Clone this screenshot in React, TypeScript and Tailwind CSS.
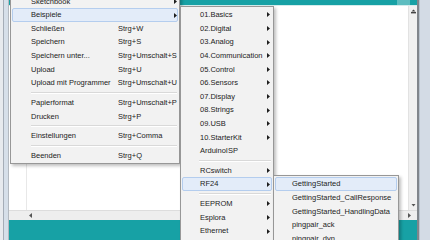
import React from "react";

type Item = {
  label?: string;
  shortcut?: string;
  arrow?: boolean;
  hl?: boolean;
  sep?: boolean;
};

const Arrow = () => (
  <svg width="3" height="5" viewBox="0 0 3 5" className="shrink-0 ml-auto">
    <polygon points="0,0 3,2.5 0,5" fill="#1e1e1e" />
  </svg>
);

function Row({ item, padCls, labelCls, arrowCls }: { item: Item; padCls: string; labelCls: string; arrowCls: string }) {
  return (
    <div
      className={`mx-[1px] h-[13.6px] flex items-center rounded-[2px] border ${
        item.hl ? "border-[#b4cdee] bg-[#e3ecf9]" : "border-transparent"
      } ${padCls}`}
    >
      <span className={`whitespace-nowrap ${labelCls}`}>{item.label}</span>
      {item.shortcut && <span className="whitespace-nowrap">{item.shortcut}</span>}
      {item.arrow && (
        <span className={`ml-auto flex ${arrowCls}`}>
          <Arrow />
        </span>
      )}
    </div>
  );
}

function Sep({ cls }: { cls: string }) {
  return (
    <div className={`h-[6.1px] flex flex-col justify-center ${cls}`}>
      <div className="h-px bg-[#d9d9d9]" />
      <div className="h-px bg-white" />
    </div>
  );
}

const menu1: Item[] = [
  { label: "Sketchbook", arrow: true },
  { label: "Beispiele", arrow: true, hl: true },
  { label: "Schließen", shortcut: "Strg+W" },
  { label: "Speichern", shortcut: "Strg+S" },
  { label: "Speichern unter...", shortcut: "Strg+Umschalt+S" },
  { label: "Upload", shortcut: "Strg+U" },
  { label: "Upload mit Programmer", shortcut: "Strg+Umschalt+U" },
  { sep: true },
  { label: "Papierformat", shortcut: "Strg+Umschalt+P" },
  { label: "Drucken", shortcut: "Strg+P" },
  { sep: true },
  { label: "Einstellungen", shortcut: "Strg+Comma" },
  { sep: true },
  { label: "Beenden", shortcut: "Strg+Q" },
];

const menu2: Item[] = [
  { label: "01.Basics", arrow: true },
  { label: "02.Digital", arrow: true },
  { label: "03.Analog", arrow: true },
  { label: "04.Communication", arrow: true },
  { label: "05.Control", arrow: true },
  { label: "06.Sensors", arrow: true },
  { label: "07.Display", arrow: true },
  { label: "08.Strings", arrow: true },
  { label: "09.USB", arrow: true },
  { label: "10.StarterKit", arrow: true },
  { label: "ArduinoISP" },
  { sep: true },
  { label: "RCswitch", arrow: true },
  { label: "RF24", arrow: true, hl: true },
  { sep: true },
  { label: "EEPROM", arrow: true },
  { label: "Esplora", arrow: true },
  { label: "Ethernet", arrow: true },
  { label: "Firmata", arrow: true },
];

const menu3: Item[] = [
  { label: "GettingStarted", hl: true },
  { label: "GettingStarted_CallResponse" },
  { label: "GettingStarted_HandlingData" },
  { label: "pingpair_ack" },
  { label: "pingpair_dyn" },
  { label: "pingpair_irq" },
];

export default function App() {
  return (
    <div className="relative w-[430px] h-[240px] overflow-hidden flex bg-white font-['Liberation_Sans',Arial,sans-serif] text-[7.5px] leading-none text-[#1c1c1c]">
      {/* left window frame */}
      <div className="w-[9px] h-full flex shrink-0">
        <div className="w-[3px] bg-[#e7eaee]" />
        <div className="w-[1px] bg-[#a5adb7]" />
        <div className="w-[4px] bg-[#d6dfe9]" />
        <div className="w-[1px] bg-[#b3b9c0]" />
      </div>

      {/* IDE main column */}
      <div className="w-[408px] h-full flex flex-col shrink-0">
        <div className="h-[5px] bg-[#17a1a5] flex justify-end">
          <div className="w-[13px] mr-[7px] bg-[#5ebdc0]" />
        </div>
        <div className="h-px bg-[#d4ecec]" />
        <div className="flex-1 flex">
          <div className="w-[18px] border-r border-[#e8e8e8] bg-white" />
          <div className="flex-1 bg-white" />
          <div className="w-[9px] bg-[#f0f0f0] border-l border-[#e2e2e2] flex flex-col items-center justify-between pt-[3px] pb-[3px]">
            <svg width="5" height="5" viewBox="0 0 5 5">
              <rect x="0" y="3" width="5" height="1.4" fill="#444" />
              <polygon points="0.5,2.6 2.5,0.4 4.5,2.6" fill="#444" />
            </svg>
            <svg width="5" height="3" viewBox="0 0 5 3">
              <polygon points="0.5,0 4.5,0 2.5,2.6" fill="#555" />
            </svg>
          </div>
        </div>
        <div className="h-[10px] bg-[#eeeeee] border-t border-[#dddddd] flex items-center justify-between pl-[20px] pr-[6px]">
          <svg width="3" height="5" viewBox="0 0 3 5">
            <polygon points="3,0 0,2.5 3,5" fill="#555" />
          </svg>
          <svg width="3" height="5" viewBox="0 0 3 5">
            <polygon points="0,0 3,2.5 0,5" fill="#555" />
          </svg>
        </div>
        <div className="h-[20px] bg-[#17a1a5]" />
      </div>

      {/* right window frame */}
      <div className="flex-1 flex">
        <div className="w-[2px] bg-[#80858b]" />
        <div className="w-[1px] bg-[#b7c1cc]" />
        <div className="flex-1 bg-[#d3dbe5]" />
      </div>

      {/* Datei menu */}
      <div className="absolute left-[10px] top-[-8.4px] w-[170px] bg-[#f2f2f2] border border-[#979797] pt-[2px] pb-[1px] shadow-[2px_2px_3px_rgba(0,0,0,0.25)]">
        {menu1.map((it, i) =>
          it.sep ? (
            <Sep key={i} cls="ml-[20px] mr-[2px]" />
          ) : (
            <Row key={i} item={it} padCls="pl-[18px]" labelCls="w-[87px]" arrowCls="mr-[0px]" />
          )
        )}
      </div>

      {/* Beispiele submenu */}
      <div className="absolute left-[180px] top-[6.2px] w-[94px] bg-[#f2f2f2] border border-[#979797] pt-[1px] shadow-[2px_2px_3px_rgba(0,0,0,0.25)]">
        {menu2.map((it, i) =>
          it.sep ? (
            <Sep key={i} cls="ml-[18px] mr-[2px]" />
          ) : (
            <Row key={i} item={it} padCls="pl-[17px]" labelCls="" arrowCls="mr-[1px]" />
          )
        )}
      </div>

      {/* RF24 submenu */}
      <div className="absolute left-[273px] top-[175.3px] w-[126px] bg-[#f2f2f2] border border-[#979797] pt-[1px] shadow-[2px_2px_3px_rgba(0,0,0,0.25)]">
        {menu3.map((it, i) => (
          <Row key={i} item={it} padCls="pl-[16px]" labelCls="" arrowCls="" />
        ))}
      </div>
    </div>
  );
}
